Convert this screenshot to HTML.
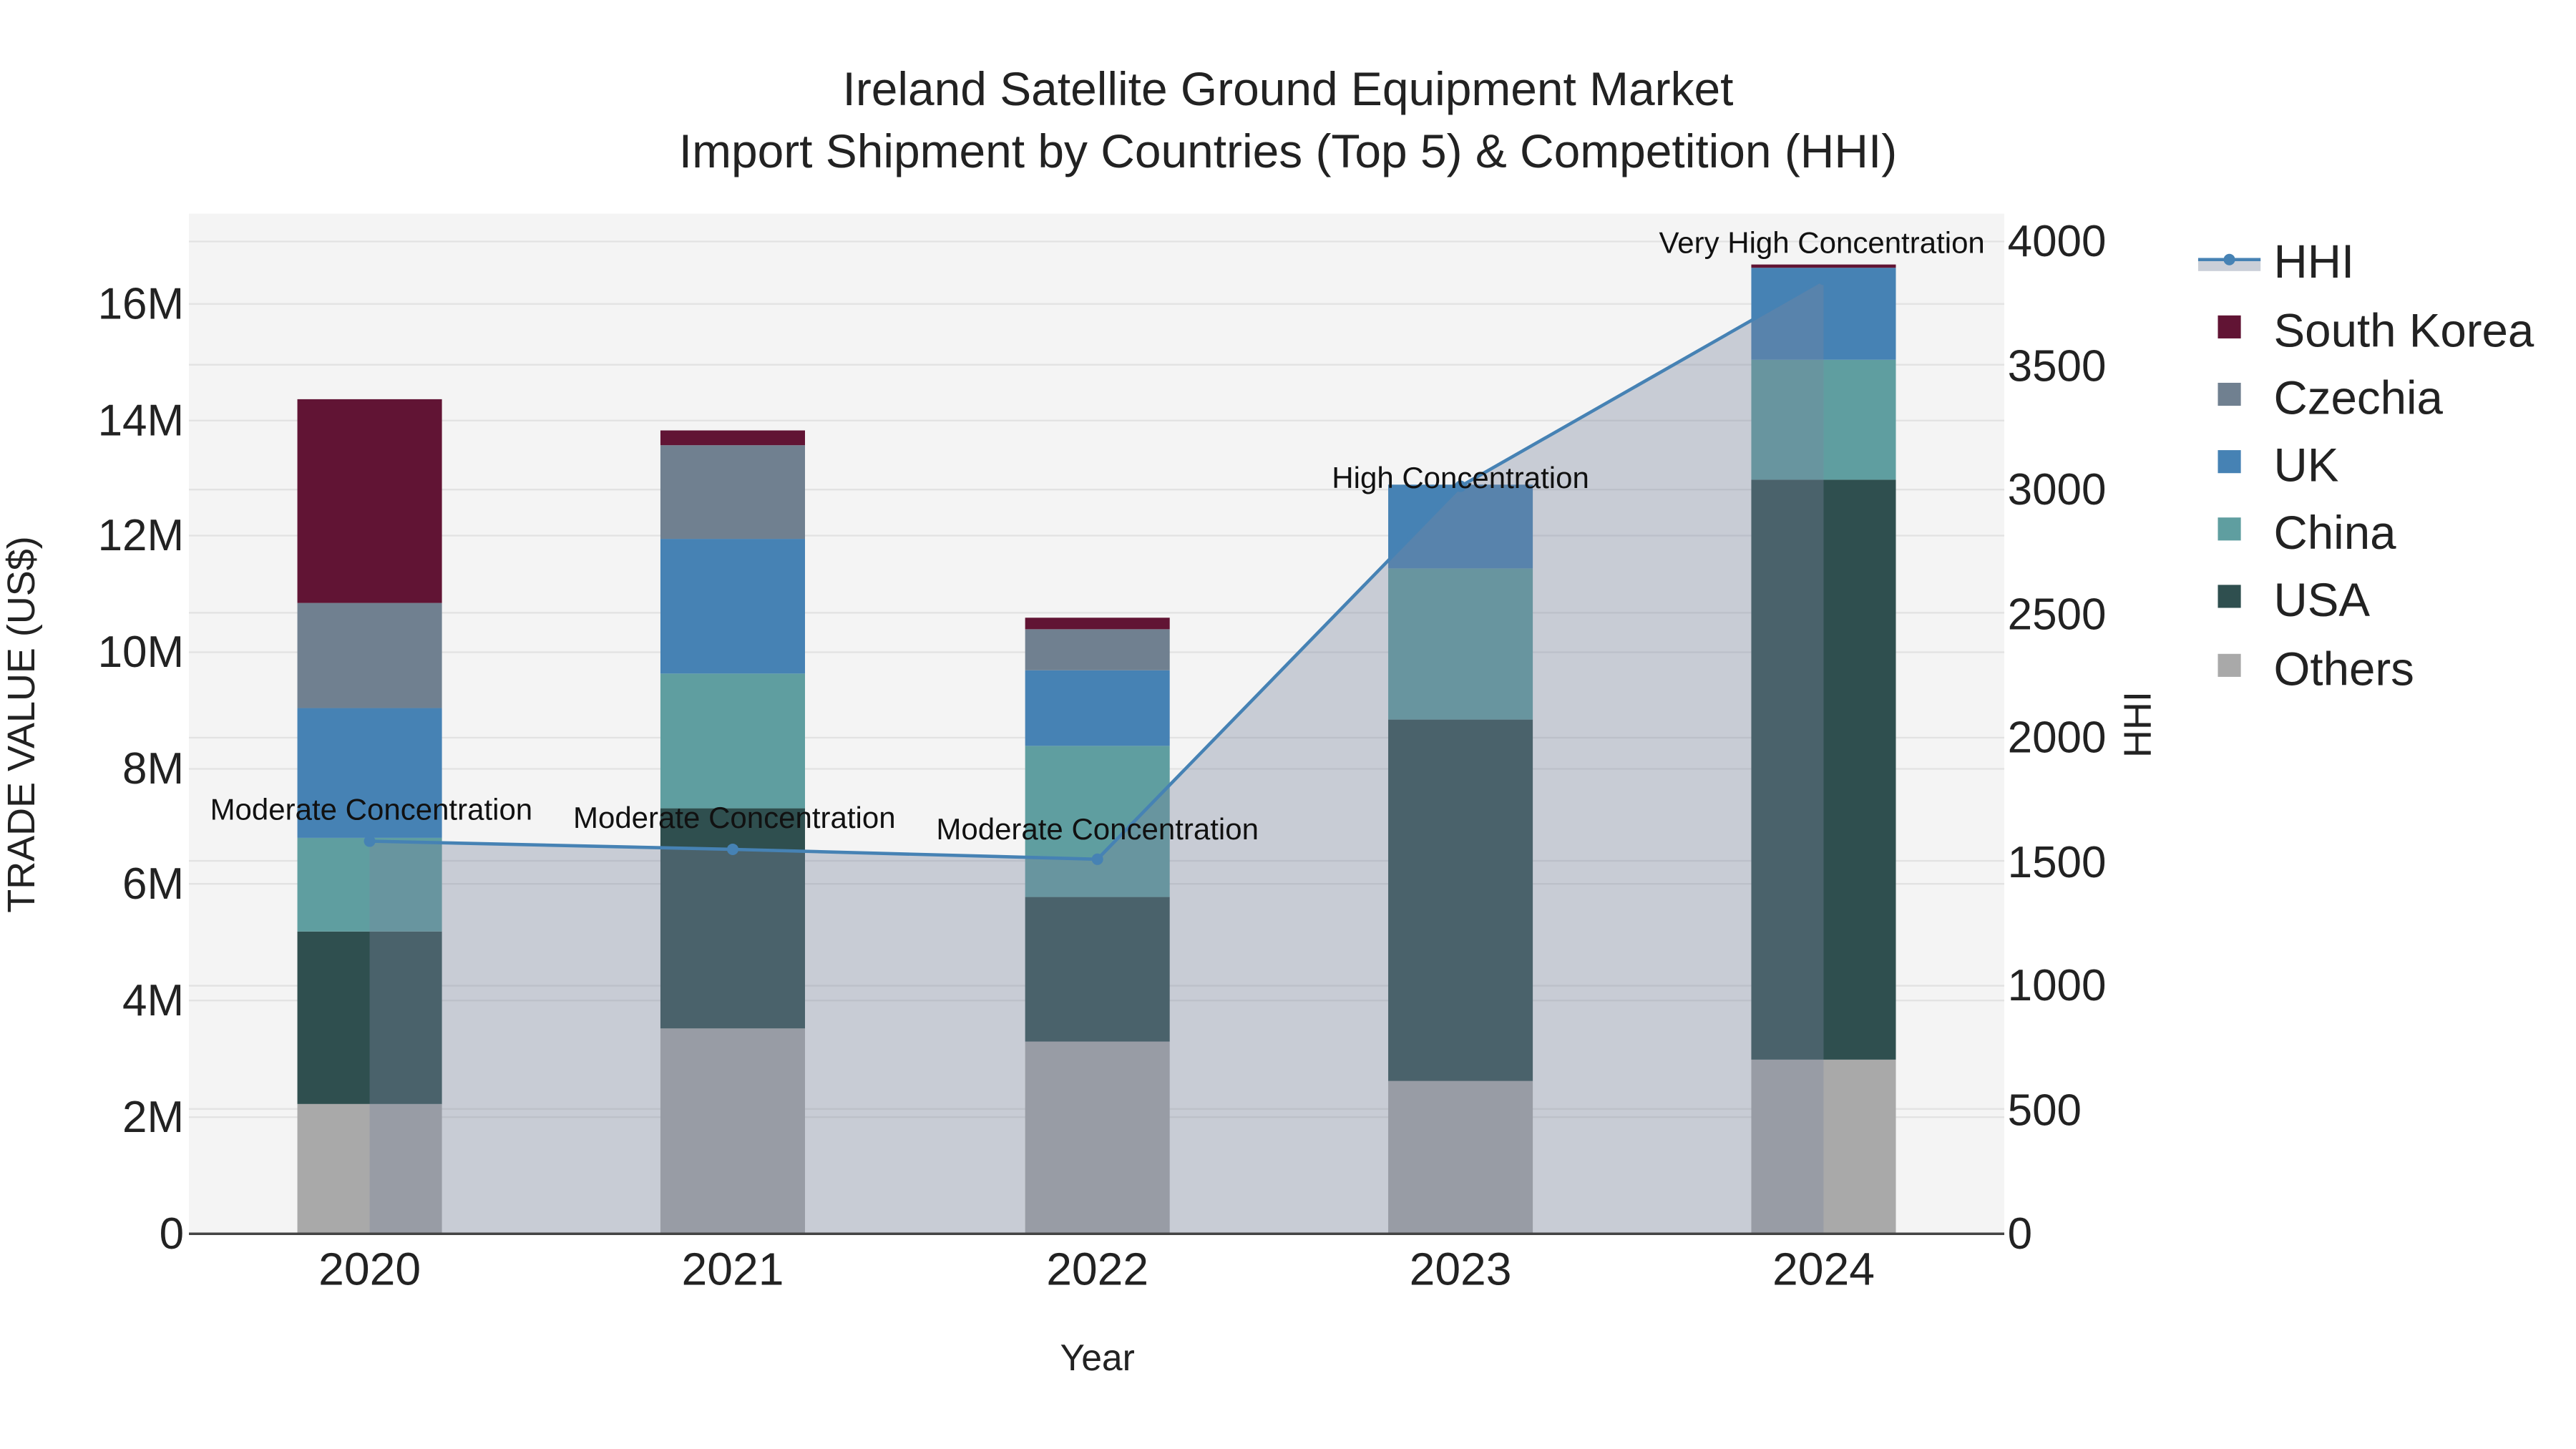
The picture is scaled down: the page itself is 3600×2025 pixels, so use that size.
<!DOCTYPE html>
<html><head><meta charset="utf-8"><style>html,body{margin:0;padding:0;background:#fff}svg{display:block}</style></head>
<body>
<svg width="3600" height="2025" viewBox="0 0 1568 882" xmlns="http://www.w3.org/2000/svg" font-family="Liberation Sans, sans-serif">
<rect width="1568" height="882" fill="#fff"/>
<rect x="115" y="130" width="1105" height="621" fill="#f4f4f4"/>
<g stroke="#e2e2e2" stroke-width="1">
<line x1="115" x2="1220" y1="185" y2="185"/><line x1="115" x2="1220" y1="256" y2="256"/><line x1="115" x2="1220" y1="326" y2="326"/><line x1="115" x2="1220" y1="397" y2="397"/><line x1="115" x2="1220" y1="468" y2="468"/><line x1="115" x2="1220" y1="538" y2="538"/><line x1="115" x2="1220" y1="609" y2="609"/><line x1="115" x2="1220" y1="680" y2="680"/>
<line x1="115" x2="1220" y1="147" y2="147"/><line x1="115" x2="1220" y1="222" y2="222"/><line x1="115" x2="1220" y1="298" y2="298"/><line x1="115" x2="1220" y1="373" y2="373"/><line x1="115" x2="1220" y1="449" y2="449"/><line x1="115" x2="1220" y1="524" y2="524"/><line x1="115" x2="1220" y1="600" y2="600"/><line x1="115" x2="1220" y1="675" y2="675"/>
</g>
<g>
<rect x="181" y="672" width="88" height="79" fill="#a9a9a9"/><rect x="181" y="567" width="88" height="105" fill="#2f4f4f"/><rect x="181" y="510" width="88" height="57" fill="#5f9ea0"/><rect x="181" y="431" width="88" height="79" fill="#4682b4"/><rect x="181" y="367" width="88" height="64" fill="#708090"/><rect x="181" y="243" width="88" height="124" fill="#611434"/>
<rect x="402" y="626" width="88" height="125" fill="#a9a9a9"/><rect x="402" y="492" width="88" height="134" fill="#2f4f4f"/><rect x="402" y="410" width="88" height="82" fill="#5f9ea0"/><rect x="402" y="328" width="88" height="82" fill="#4682b4"/><rect x="402" y="271" width="88" height="57" fill="#708090"/><rect x="402" y="262" width="88" height="9" fill="#611434"/>
<rect x="624" y="634" width="88" height="117" fill="#a9a9a9"/><rect x="624" y="546" width="88" height="88" fill="#2f4f4f"/><rect x="624" y="454" width="88" height="92" fill="#5f9ea0"/><rect x="624" y="408" width="88" height="46" fill="#4682b4"/><rect x="624" y="383" width="88" height="25" fill="#708090"/><rect x="624" y="376" width="88" height="7" fill="#611434"/>
<rect x="845" y="658" width="88" height="93" fill="#a9a9a9"/><rect x="845" y="438" width="88" height="220" fill="#2f4f4f"/><rect x="845" y="346" width="88" height="92" fill="#5f9ea0"/><rect x="845" y="295" width="88" height="51" fill="#4682b4"/>
<rect x="1066" y="645" width="88" height="106" fill="#a9a9a9"/><rect x="1066" y="292" width="88" height="353" fill="#2f4f4f"/><rect x="1066" y="219" width="88" height="73" fill="#5f9ea0"/><rect x="1066" y="163" width="88" height="56" fill="#4682b4"/><rect x="1066" y="161" width="88" height="2" fill="#611434"/>
</g>
<polygon points="225,512 446,517 668,523 889,296 1110,170 1110,751 225,751" fill="rgb(123,134,157)" fill-opacity="0.36"/>
<polyline points="225,512 446,517 668,523 889,296 1110,170" fill="none" stroke="#4682b4" stroke-width="2"/>
<g fill="#4682b4"><circle cx="225" cy="512" r="3.5"/><circle cx="446" cy="517" r="3.5"/><circle cx="668" cy="523" r="3.5"/><circle cx="889" cy="296" r="3.5"/><circle cx="1110" cy="170" r="3.5"/></g>
<line x1="115" x2="1220" y1="751" y2="751" stroke="#444" stroke-width="1.5"/>
<g font-size="18.3" fill="#111" text-anchor="middle">
<text x="226" y="499">Moderate Concentration</text><text x="447" y="504">Moderate Concentration</text><text x="668" y="511">Moderate Concentration</text><text x="889" y="297">High Concentration</text><text x="1109" y="154">Very High Concentration</text>
</g>
<g font-size="27" fill="#222" text-anchor="end">
<text x="112" y="760">0</text><text x="112" y="689">2M</text><text x="112" y="618">4M</text><text x="112" y="547">6M</text><text x="112" y="477">8M</text><text x="112" y="406">10M</text><text x="112" y="335">12M</text><text x="112" y="265">14M</text><text x="112" y="194">16M</text>
</g>
<g font-size="27" fill="#222" text-anchor="start">
<text x="1222" y="760">0</text><text x="1222" y="685">500</text><text x="1222" y="609">1000</text><text x="1222" y="534">1500</text><text x="1222" y="458">2000</text><text x="1222" y="383">2500</text><text x="1222" y="307">3000</text><text x="1222" y="232">3500</text><text x="1222" y="156">4000</text>
</g>
<g font-size="28" fill="#222" text-anchor="middle">
<text x="225" y="782">2020</text><text x="446" y="782">2021</text><text x="668" y="782">2022</text><text x="889" y="782">2023</text><text x="1110" y="782">2024</text>
</g>
<text x="668" y="834" font-size="22.5" fill="#222" text-anchor="middle">Year</text>
<text transform="translate(21,441) rotate(-90)" font-size="23.5" fill="#222" text-anchor="middle">TRADE VALUE (US$)</text>
<text transform="translate(1309,441) rotate(-90)" font-size="23.5" fill="#222" text-anchor="middle">HHI</text>
<g font-size="28.7" fill="#222" text-anchor="middle">
<text x="784" y="64">Ireland Satellite Ground Equipment Market</text>
<text x="784" y="102">Import Shipment by Countries (Top 5) &amp; Competition (HHI)</text>
</g>
<g>
<rect x="1338" y="158" width="38" height="7" fill="rgb(123,134,157)" fill-opacity="0.4"/>
<line x1="1338" x2="1376" y1="158" y2="158" stroke="#4682b4" stroke-width="2"/><circle cx="1357" cy="158" r="3.5" fill="#4682b4"/>
<rect x="1350" y="192" width="14" height="14" fill="#611434"/>
<rect x="1350" y="233" width="14" height="14" fill="#708090"/>
<rect x="1350" y="274" width="14" height="14" fill="#4682b4"/>
<rect x="1350" y="315" width="14" height="14" fill="#5f9ea0"/>
<rect x="1350" y="356" width="14" height="14" fill="#2f4f4f"/>
<rect x="1350" y="398" width="14" height="14" fill="#a9a9a9"/>
</g>
<g font-size="28.5" fill="#222">
<text x="1384" y="169">HHI</text><text x="1384" y="211">South Korea</text><text x="1384" y="252">Czechia</text><text x="1384" y="293">UK</text><text x="1384" y="334">China</text><text x="1384" y="375">USA</text><text x="1384" y="417">Others</text>
</g>
</svg>
</body></html>
